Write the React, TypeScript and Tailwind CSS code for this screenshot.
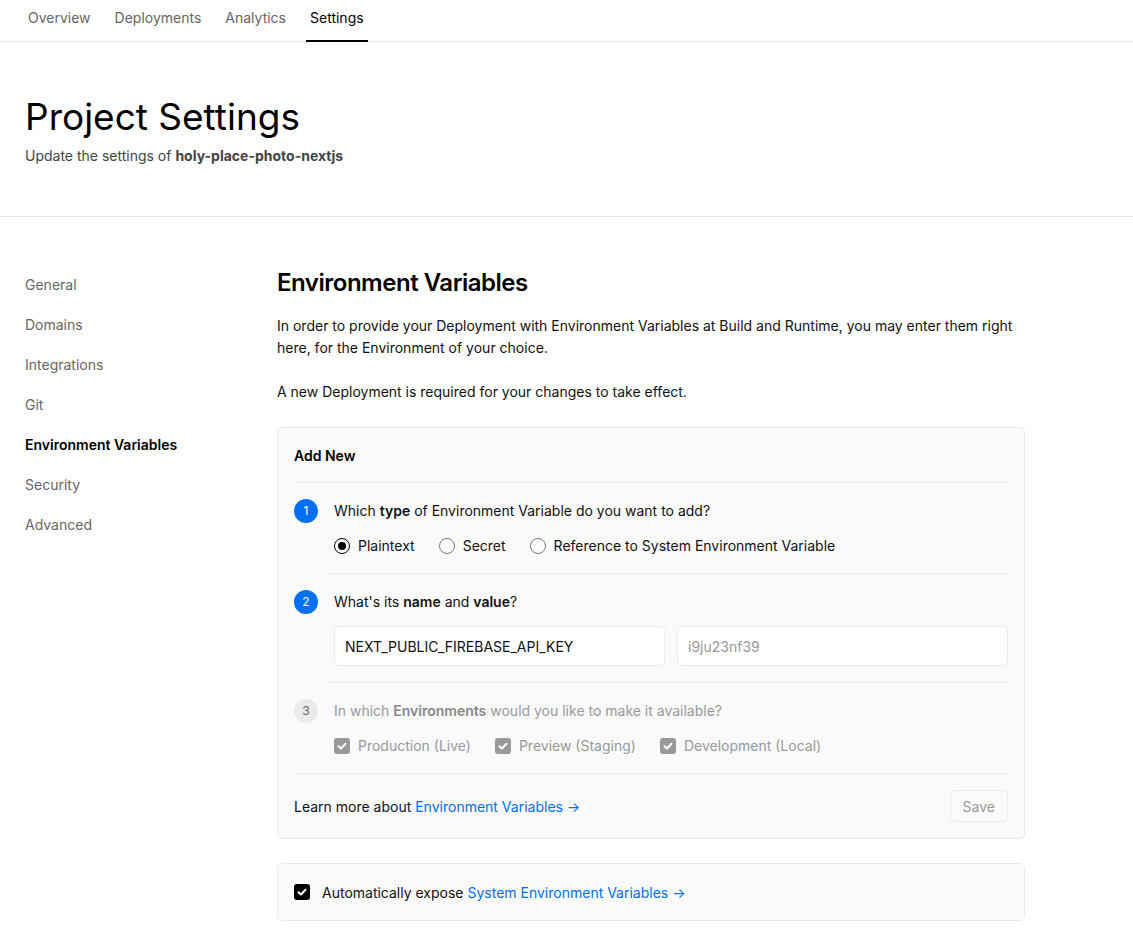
import React from "react";

const Check = ({ className = "" }: { className?: string }) => (
  <svg viewBox="0 0 16 16" className={className} fill="none" stroke="white" strokeWidth="2" strokeLinecap="round" strokeLinejoin="round">
    <path d="M4.5 8.2 L7 10.5 L11.5 5.8" />
  </svg>
);

const Radio = ({ checked, label }: { checked?: boolean; label: string }) => (
  <div className="flex items-center gap-2">
    <span className={`flex h-4 w-4 items-center justify-center rounded-full border ${checked ? "border-black" : "border-[#777]"} bg-white`}>
      {checked && <span className="h-2 w-2 rounded-full bg-black" />}
    </span>
    <span className="text-[14px] leading-5 text-[#111]">{label}</span>
  </div>
);

const GrayCheck = ({ label }: { label: string }) => (
  <div className="flex items-center gap-2">
    <span className="flex h-4 w-4 items-center justify-center rounded-[3px] bg-[#999]">
      <Check className="h-4 w-4" />
    </span>
    <span className="text-[14px] leading-5 text-[#999]">{label}</span>
  </div>
);

const StepCircle = ({ n, active }: { n: number; active?: boolean }) => (
  <span
    className={`flex h-6 w-6 shrink-0 items-center justify-center rounded-full text-[12px] ${
      active ? "bg-[#0070f3] text-white" : "bg-[#eaeaea] text-[#666]"
    }`}
  >
    {n}
  </span>
);

export default function App() {
  const tabs = ["Overview", "Deployments", "Analytics", "Settings"];
  const side = ["General", "Domains", "Integrations", "Git", "Environment Variables", "Security", "Advanced"];
  return (
    <div className="min-h-screen bg-white text-[#111]" style={{ fontFamily: "Inter, 'Noto Sans', sans-serif" }}>
      {/* Tabs */}
      <div className="flex h-[42px] items-stretch gap-4 border-b border-[#eaeaea] pl-6">
        {tabs.map((t) => (
          <div
            key={t}
            className={`flex items-center px-1 pb-[5px] text-[14px] ${
              t === "Settings" ? "border-b-2 border-black text-black" : "border-b-2 border-transparent text-[#666]"
            } -mb-px`}
          >
            {t}
          </div>
        ))}
      </div>

      {/* Header */}
      <div className="border-b border-[#eaeaea] px-[25px] pb-[50px] pt-[55px]">
        <h1 className="text-[37px] font-normal leading-10 text-black">Project Settings</h1>
        <p className="mt-[9px] text-[14px] leading-5 text-[#444]">
          Update the settings of <span className="font-bold">holy-place-photo-nextjs</span>
        </p>
      </div>

      {/* Body */}
      <div className="flex px-[25px] pt-[50px] pb-10">
        <nav className="w-[252px] shrink-0 pt-2 flex flex-col gap-5">
          {side.map((s) => (
            <div
              key={s}
              className={`text-[14px] leading-5 ${s === "Environment Variables" ? "font-semibold text-black" : "text-[#666]"}`}
            >
              {s}
            </div>
          ))}
        </nav>

        <main className="w-[748px]">
          <h2 className="text-[24px] font-semibold leading-8 tracking-[-0.02em] text-black">Environment Variables</h2>
          <p className="mt-4 text-[14px] leading-[22px] text-[#111]">
            In order to provide your Deployment with Environment Variables at Build and Runtime, you may enter them right
            here, for the Environment of your choice.
          </p>
          <p className="mt-[22px] text-[14px] leading-[22px] text-[#111]">
            A new Deployment is required for your changes to take effect.
          </p>

          {/* Add New card */}
          <div className="mt-6 rounded-[5px] border border-[#eaeaea] bg-[#fafafa] px-4">
            <div className="flex h-[55px] items-center border-b border-[#eaeaea] text-[14px] font-semibold text-black">
              Add New
            </div>

            {/* Step 1 */}
            <div className="pt-4">
              <div className="flex items-center gap-4">
                <StepCircle n={1} active />
                <div className="text-[14px] leading-5 text-[#111]">
                  Which <span className="font-semibold">type</span> of Environment Variable do you want to add?
                </div>
              </div>
              <div className="ml-[40px] mt-[13px] flex items-center gap-6">
                <Radio checked label="Plaintext" />
                <Radio label="Secret" />
                <Radio label="Reference to System Environment Variable" />
              </div>
              <div className="ml-[35px] mt-[17px] border-b border-[#eaeaea]" />
            </div>

            {/* Step 2 */}
            <div className="pt-4">
              <div className="flex items-center gap-4">
                <StepCircle n={2} active />
                <div className="text-[14px] leading-5 text-[#111]">
                  What's its <span className="font-semibold">name</span> and <span className="font-semibold">value</span>?
                </div>
              </div>
              <div className="ml-[40px] mt-3 grid grid-cols-2 gap-3">
                <div className="flex h-10 items-center rounded-[5px] border border-[#eaeaea] bg-white px-[10px] text-[14px] text-[#111]">
                  NEXT_PUBLIC_FIREBASE_API_KEY
                </div>
                <div className="flex h-10 items-center rounded-[5px] border border-[#eaeaea] bg-white px-[10px] text-[14px] text-[#999]">
                  i9ju23nf39
                </div>
              </div>
              <div className="ml-[35px] mt-4 border-b border-[#eaeaea]" />
            </div>

            {/* Step 3 */}
            <div className="pt-4">
              <div className="flex items-center gap-4">
                <StepCircle n={3} />
                <div className="text-[14px] leading-5 text-[#999]">
                  In which <span className="font-semibold text-[#888]">Environments</span> would you like to make it available?
                </div>
              </div>
              <div className="ml-[40px] mt-[13px] flex items-center gap-6">
                <GrayCheck label="Production (Live)" />
                <GrayCheck label="Preview (Staging)" />
                <GrayCheck label="Development (Local)" />
              </div>
              <div className="mt-[17px] border-b border-[#eaeaea]" />
            </div>

            {/* Footer */}
            <div className="flex h-[64px] items-center justify-between">
              <div className="text-[14px] text-[#111]">
                Learn more about <span className="text-[#0070f3]">Environment Variables →</span>
              </div>
              <div className="flex h-8 items-center rounded-[5px] border border-[#eaeaea] px-3 text-[14px] text-[#999]">
                Save
              </div>
            </div>
          </div>

          {/* Auto expose card */}
          <div className="mt-6 flex h-[58px] items-center gap-3 rounded-[5px] border border-[#eaeaea] bg-[#fafafa] px-4">
            <span className="flex h-4 w-4 items-center justify-center rounded-[3px] bg-black">
              <Check className="h-4 w-4" />
            </span>
            <span className="text-[14px] text-[#111]">
              Automatically expose <span className="text-[#0070f3]">System Environment Variables →</span>
            </span>
          </div>
        </main>
      </div>
    </div>
  );
}
